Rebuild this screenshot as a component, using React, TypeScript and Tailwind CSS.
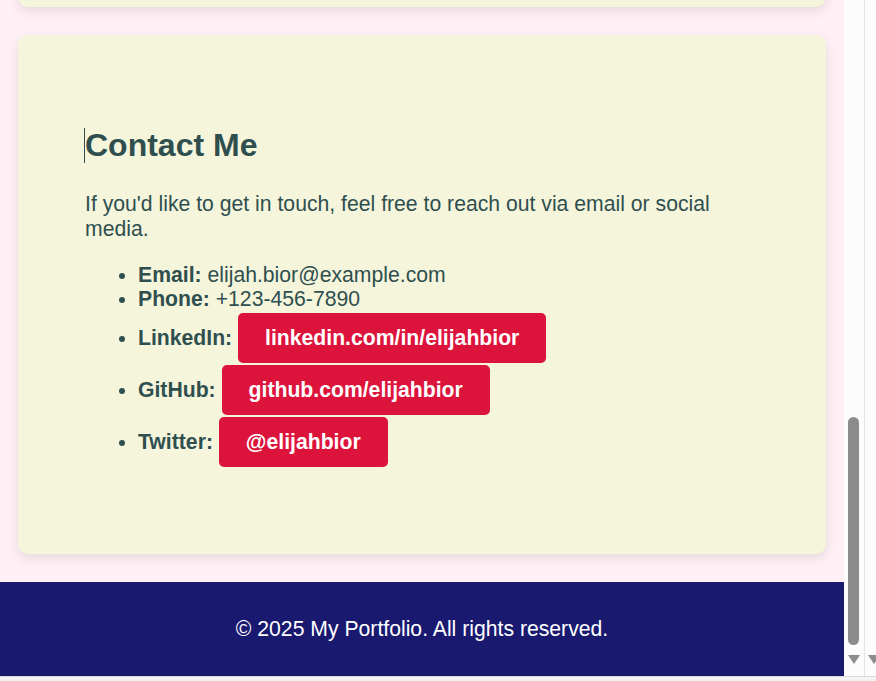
export default function App() {
	const links = [
		{ label: "LinkedIn:", text: "linkedin.com/in/elijahbior" },
		{ label: "GitHub:", text: "github.com/elijahbior" },
		{ label: "Twitter:", text: "@elijahbior" },
	];
	return (
		<div className="w-[876px] h-[681px] overflow-hidden flex flex-col bg-[#f3f3f3] font-['Liberation_Sans',Arial,sans-serif]">
			<div className="flex h-[676px]">
				{/* page */}
				<div className="w-[844px] h-[676px] overflow-hidden flex flex-col bg-[#fff0f5] text-[#2f4f4f]">
					<div className="shrink-0 mx-[18px] -mt-[113px] h-[120px] rounded-[10px] bg-[#f5f5dc] shadow-[0_4px_12px_rgba(0,0,0,0.1)]"></div>

					<section className="shrink-0 mx-[18px] mt-[28px] h-[519px] rounded-[10px] bg-[#f5f5dc] shadow-[0_4px_12px_rgba(0,0,0,0.1)] pt-[92px] px-[67px]">
						<h2 className="relative text-[32px] leading-[37px] font-bold">
							<span className="absolute left-[-1px] top-[1px] h-[35px] w-px bg-[#2f4f4f]"></span>
							Contact Me
						</h2>
						<p className="mt-[27px] text-[21.2px] leading-[25px]">
							If you'd like to get in touch, feel free to reach out via email or social media.
						</p>
						<ul className="mt-[22px] pl-[53px] list-disc text-[21.2px] leading-[24px]">
							<li>
								<strong>Email:</strong> elijah.bior@example.com
							</li>
							<li>
								<strong>Phone:</strong> +123-456-7890
							</li>
							{links.map((l, i) => (
								<li key={l.label} className={i === 0 ? "mt-[1px]" : ""}>
									<strong>{l.label}</strong>{" "}
									<a className="inline-block my-[1px] px-[27px] py-[13px] rounded-[5px] bg-[#dc143c] text-white font-bold">
										{l.text}
									</a>
								</li>
							))}
						</ul>
					</section>

					<footer className="shrink-0 mt-[28px] h-[94px] bg-[#191970] text-white text-[21.2px] leading-[24px] flex items-center justify-center">
						© 2025 My Portfolio. All rights reserved.
					</footer>
				</div>

				{/* scrollbars */}
				<div className="w-[20px] bg-[#fcfcfc] flex flex-col items-start pl-[4px]">
					<div className="mt-[417px] w-[11px] h-[228px] rounded-full bg-[#8c8c8c]"></div>
					<svg className="mt-[10px]" width="12" height="10" viewBox="0 0 12 10">
						<path d="M0 0 H12 L6 9 Z" fill="#8c8c8c" />
					</svg>
				</div>
				<div className="w-px bg-[#e4e4e4]"></div>
				<div className="w-[11px] bg-[#fcfcfc] flex flex-col items-start pl-[3px] overflow-hidden">
					<svg className="mt-[655px] shrink-0" width="12" height="10" viewBox="0 0 12 10">
						<path d="M0 0 H12 L6 9 Z" fill="#8c8c8c" />
					</svg>
				</div>
			</div>
			<div className="h-px bg-[#dcdcdc]"></div>
		</div>
	);
}
